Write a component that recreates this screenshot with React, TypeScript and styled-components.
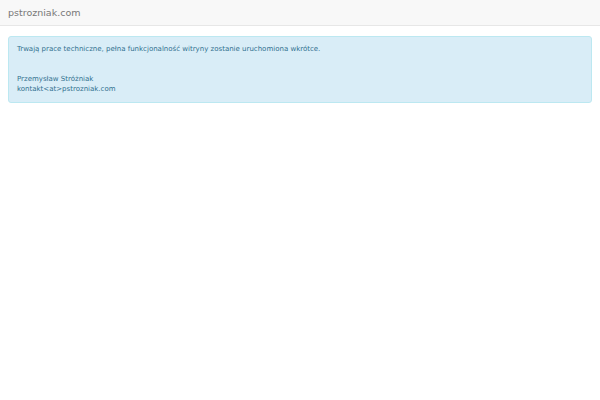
import styled, { createGlobalStyle } from "styled-components";

const Global = createGlobalStyle`
  body {
    margin: 0;
    font-family: "DejaVu Sans", Verdana, sans-serif;
    background: #ffffff;
  }
`;

const Navbar = styled.nav`
  height: 25px;
  background: #f8f8f8;
  border-bottom: 1px solid #e7e7e7;
  display: flex;
  align-items: center;
  padding: 0 8px;
`;

const Brand = styled.span`
  font-size: 9.5px;
  color: #777777;
`;

const Alert = styled.div`
  margin: 10px 8px 0;
  padding: 7px 8px 8px;
  background: #d9edf7;
  border: 1px solid #bce8f1;
  border-radius: 3px;
  color: #31708f;
  font-size: 7px;
  line-height: 10px;
`;

const Para = styled.p<{ $gap?: number }>`
  margin: ${({ $gap }) => $gap ?? 0}px 0 0;
`;

export default function App() {
  return (
    <>
      <Global />
      <Navbar>
        <Brand>pstrozniak.com</Brand>
      </Navbar>
      <Alert>
        <Para>
          Trwają prace techniczne, pełna funkcjonalność witryny zostanie
          uruchomiona wkrótce.
        </Para>
        <Para $gap={20}>
          Przemysław Stróżniak
          <br />
          kontakt&lt;at&gt;pstrozniak.com
        </Para>
      </Alert>
    </>
  );
}
